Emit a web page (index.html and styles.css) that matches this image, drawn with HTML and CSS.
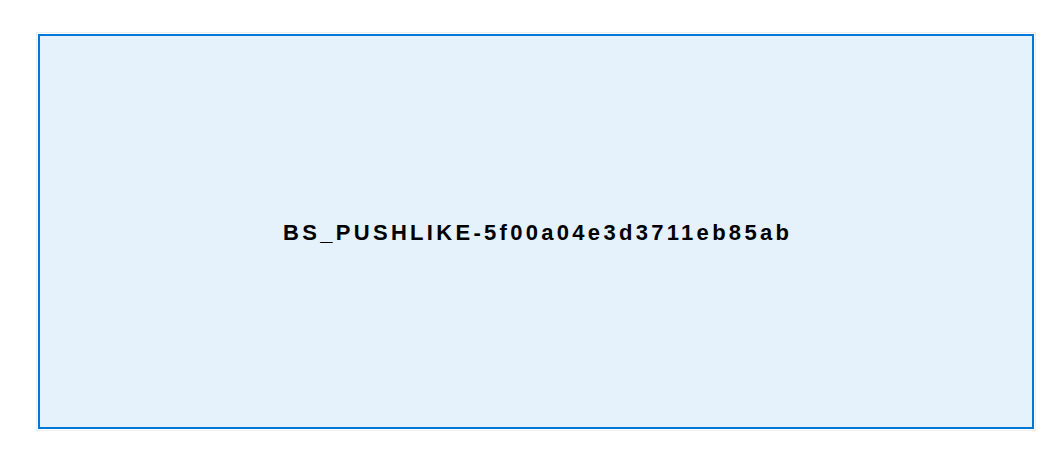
FILE: index.html
```html
<!DOCTYPE html>
<html>
<head>
<meta charset="utf-8">
<link rel="stylesheet" href="styles.css">
</head>
<body>
<div class="frame">
  <button class="push">BS_PUSHLIKE-5f00a04e3d3711eb85ab</button>
</div>
</body>
</html>
```
FILE: styles.css
```css
html, body {
  margin: 0;
  padding: 0;
  background: #ffffff;
}
body {
  padding: 32px 0 0 36px;
}
.frame {
  width: 1000px;
  height: 399px;
  box-sizing: border-box;
  border: 1px solid #f0f0f0;
  padding: 1px;
  display: flex;
}
.push {
  flex: 1;
  margin: 0;
  box-sizing: border-box;
  border: 2px solid #0078d7;
  background: #e5f1fb;
  color: #000000;
  font-family: "Liberation Sans", Arial, sans-serif;
  font-weight: bold;
  font-size: 22px;
  letter-spacing: 3.3px;
  padding: 2px 0 0 3.3px;
  display: flex;
  align-items: center;
  justify-content: center;
}
```
